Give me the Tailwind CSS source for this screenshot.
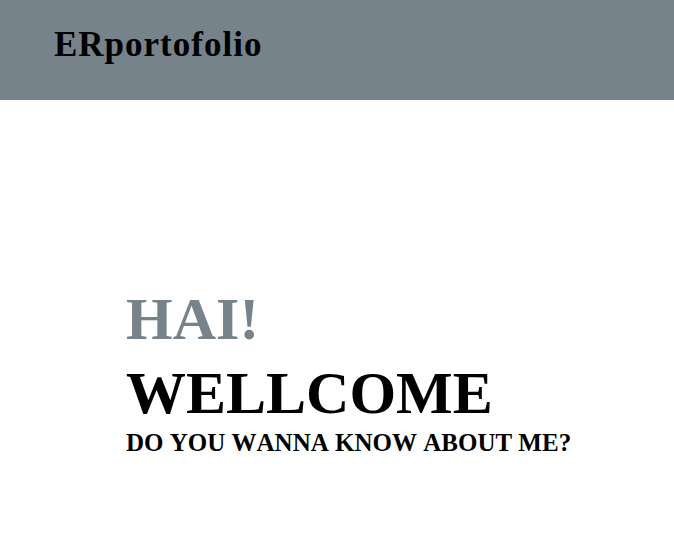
<!DOCTYPE html>
<html lang="en">
<head>
<meta charset="utf-8">
<meta name="viewport" content="width=device-width, initial-scale=1">
<title>ERportofolio</title>
<script src="https://cdn.jsdelivr.net/npm/@tailwindcss/browser@4"></script>
</head>
<body class="bg-white text-black font-['Liberation_Serif',serif] font-bold">
<header class="bg-[#77838b] px-[54px] pt-[25px] pb-[35px]">
<a href="#" class="block text-[35px] leading-10 tracking-[1px]">ERportofolio</a>
</header>
<main class="pl-[126px] pt-[182px]">
<h1 class="text-[60px] leading-[74px]"><span class="block text-[#77838b]">HAI!</span><span class="block">WELLCOME</span></h1>
<p class="text-[25px] leading-[26px] [font-kerning:none] whitespace-nowrap">DO YOU WANNA KNOW ABOUT ME?</p>
</main>
</body>
</html>
